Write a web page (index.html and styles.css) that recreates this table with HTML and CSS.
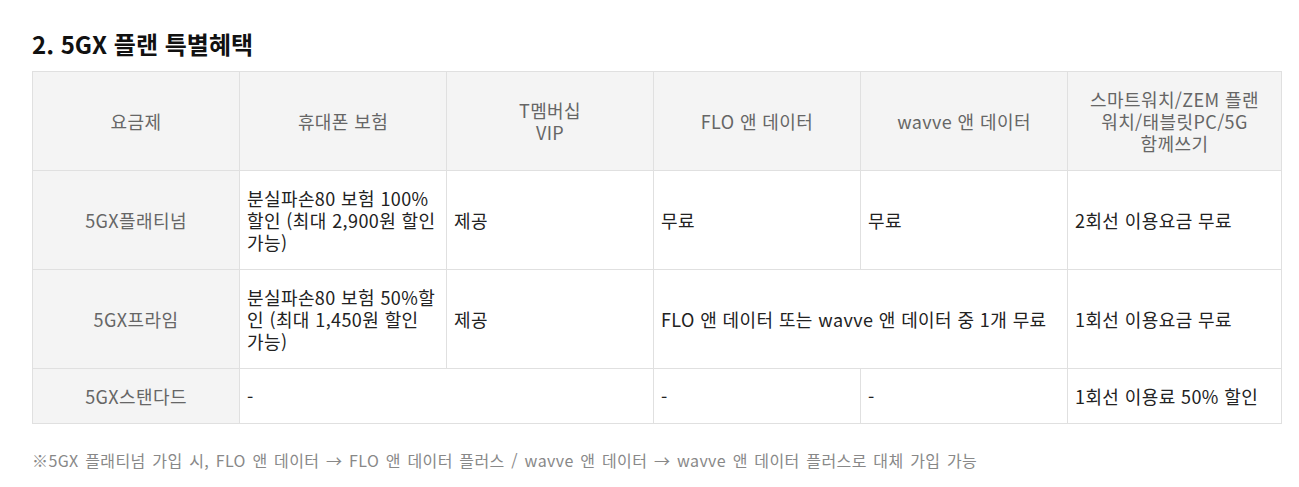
FILE: index.html
```html
<!DOCTYPE html>
<html lang="ko">
<head>
<meta charset="utf-8">
<link rel="stylesheet" href="styles.css">
</head>
<body>
<div class="page">
  <h2 class="title">2. 5GX 플랜 특별혜택</h2>
  <table class="plan">
    <colgroup>
      <col class="c"><col class="c"><col class="c"><col class="c"><col class="c"><col class="c-last">
    </colgroup>
    <thead>
      <tr>
        <th>요금제</th>
        <th>휴대폰 보험</th>
        <th>T멤버십<br>VIP</th>
        <th>FLO 앤 데이터</th>
        <th>wavve 앤 데이터</th>
        <th>스마트워치/ZEM 플랜<br>워치/태블릿PC/5G<br>함께쓰기</th>
      </tr>
    </thead>
    <tbody>
      <tr>
        <th class="rowhead">5GX플래티넘</th>
        <td>분실파손80 보험 100% 할인 (최대 2,900원 할인 가능)</td>
        <td>제공</td>
        <td>무료</td>
        <td>무료</td>
        <td>2회선 이용요금 무료</td>
      </tr>
      <tr>
        <th class="rowhead">5GX프라임</th>
        <td>분실파손80 보험 50%할인 (최대 1,450원 할인 가능)</td>
        <td>제공</td>
        <td colspan="2">FLO 앤 데이터 또는 wavve 앤 데이터 중 1개 무료</td>
        <td>1회선 이용요금 무료</td>
      </tr>
      <tr>
        <th class="rowhead">5GX스탠다드</th>
        <td colspan="2">-</td>
        <td>-</td>
        <td>-</td>
        <td>1회선 이용료 50% 할인</td>
      </tr>
    </tbody>
  </table>
  <p class="note">※5GX 플래티넘 가입 시, FLO 앤 데이터 → FLO 앤 데이터 플러스 / wavve 앤 데이터 → wavve 앤 데이터 플러스로 대체 가입 가능</p>
</div>
</body>
</html>
```
FILE: styles.css
```css
html, body {
  margin: 0;
  padding: 0;
  background: #fff;
}
body {
  font-family: "Noto Sans CJK KR", "Noto Sans", sans-serif;
  color: #222;
}
.page {
  padding: 28px 18px 0 32px;
}
.title {
  margin: 0;
  font-size: 24px;
  line-height: 32px;
  font-weight: 700;
  color: #111;
}
.plan {
  margin-top: 11px;
  width: 1249px;
  border-collapse: collapse;
  table-layout: fixed;
  font-size: 18px;
  line-height: 22px;
  letter-spacing: 0.4px;
}
.plan .c { width: 207px; }
.plan .c-last { width: 214px; }
.plan th,
.plan td {
  border: 1px solid #e0e0e0;
  padding: 16px 7px;
  vertical-align: middle;
}
.plan thead th {
  background: #f4f4f4;
  color: #666;
  font-weight: 400;
  text-align: center;
}
.plan .rowhead {
  background: #f4f4f4;
  color: #666;
  font-weight: 400;
  text-align: center;
}
.plan td {
  text-align: left;
  color: #222;
}
.note {
  margin: 25px 0 0;
  font-size: 16px;
  line-height: 22px;
  letter-spacing: 0.4px;
  word-spacing: 1.7px;
  color: #888;
}
```
